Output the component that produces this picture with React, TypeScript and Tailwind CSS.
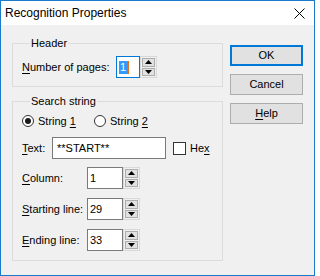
import React from 'react';

const font = { fontFamily: '"Liberation Sans", Arial, sans-serif' };

// small underlined access key
const U = ({ children }: { children: React.ReactNode }) => (
  <span className="underline underline-offset-[2px] decoration-[1px]">{children}</span>
);

const Arrow = ({ up }: { up?: boolean }) => (
  <svg width="7" height="4" viewBox="0 0 7 4" className="block">
    {up ? <polygon points="3.5,0 7,4 0,4" fill="#000" /> : <polygon points="0,0 7,0 3.5,4" fill="#000" />}
  </svg>
);

const Spinner = () => (
  <div className="flex h-[22px] w-[17px] flex-col gap-[1px] border border-[#d9d9d9] p-[1px]">
    <div className="flex flex-1 items-center justify-center border border-[#adadad] bg-[#e1e1e1]">
      <Arrow up />
    </div>
    <div className="flex flex-1 items-center justify-center border border-[#adadad] bg-[#e1e1e1]">
      <Arrow />
    </div>
  </div>
);

const SpinField = ({ label, value }: { label: React.ReactNode; value: string }) => (
  <div className="flex h-[22px] items-center">
    <span className="w-[65px]">{label}</span>
    <div className="flex h-[22px] w-[36px] items-center border border-[#7a7a7a] bg-white pl-[2px]">{value}</div>
    <Spinner />
  </div>
);

const Radio = ({ checked }: { checked?: boolean }) => (
  <span className="flex h-[12px] w-[12px] items-center justify-center rounded-full border border-[#333] bg-white">
    {checked && <span className="h-[6px] w-[6px] rounded-full bg-[#1a1a1a]" />}
  </span>
);

const Button = ({ children, primary }: { children: React.ReactNode; primary?: boolean }) => (
  <div
    className={`flex h-[21px] w-[73px] items-center justify-center bg-[#e1e1e1] ${
      primary ? 'border-2 border-[#0078d7]' : 'border border-[#adadad]'
    }`}
  >
    {children}
  </div>
);

export default function App() {
  return (
    <div
      className="flex h-[276px] w-[315px] flex-col border border-[#1979ca] bg-[#f0f0f0] text-[11px] leading-[13px] text-black"
      style={font}
    >
      {/* title bar */}
      <div className="flex h-[24px] items-center justify-between bg-white pl-[4px] pr-[9px]">
        <span className="text-[12px]">Recognition Properties</span>
        <svg width="11" height="11" viewBox="0 0 11 11">
          <path d="M0.5 0.5 L10.5 10.5 M10.5 0.5 L0.5 10.5" stroke="#000" strokeWidth="1" />
        </svg>
      </div>

      <div className="flex pl-[11px] pt-[12px]">
        {/* left column */}
        <div className="flex w-[211px] flex-col">
          <fieldset className="border border-[#dcdcdc] pb-[8px] pl-[9px]">
            <legend className="ml-[8px] px-[1px]">Header</legend>
            <div className="mt-[6px] flex h-[22px] items-center">
              <span className="w-[94px]">
                <U>N</U>umber of pages:
              </span>
              <div className="flex h-[22px] w-[24px] items-center border border-[#0078d7] bg-white pl-[2px]">
                <span className="bg-[#3399ff] px-[1px] text-white">1</span>
                <span className="h-[13px] w-[2px] bg-[#e0701a]" />
              </div>
              <Spinner />
            </div>
          </fieldset>

          <fieldset className="mt-[8px] border border-[#dcdcdc] pb-[9px] pl-[9px]">
            <legend className="ml-[8px] px-[1px]">Search string</legend>
            <div className="mt-[6px] flex h-[14px] items-center">
              <Radio checked />
              <span className="ml-[4px] w-[56px]">
                String <U>1</U>
              </span>
              <Radio />
              <span className="ml-[4px]">
                String <U>2</U>
              </span>
            </div>

            <div className="mt-[9px] flex h-[22px] items-center">
              <span className="w-[30px]">
                <U>T</U>ext:
              </span>
              <div className="flex h-[22px] w-[114px] items-center border border-[#7a7a7a] bg-white pl-[4px]">
                **START**
              </div>
              <span className="ml-[7px] h-[13px] w-[13px] border border-[#333] bg-white" />
              <span className="ml-[4px]">
                He<U>x</U>
              </span>
            </div>

            <div className="mt-[8px] flex flex-col gap-[9px]">
              <SpinField
                label={
                  <>
                    <U>C</U>olumn:
                  </>
                }
                value="1"
              />
              <SpinField
                label={
                  <>
                    <U>S</U>tarting line:
                  </>
                }
                value="29"
              />
              <SpinField
                label={
                  <>
                    <U>E</U>nding line:
                  </>
                }
                value="33"
              />
            </div>
          </fieldset>
        </div>

        {/* right column */}
        <div className="ml-[7px] flex flex-col gap-[8px] pt-[8px]">
          <Button primary>OK</Button>
          <Button>Cancel</Button>
          <Button>
            <span>
              <U>H</U>elp
            </span>
          </Button>
        </div>
      </div>
    </div>
  );
}
